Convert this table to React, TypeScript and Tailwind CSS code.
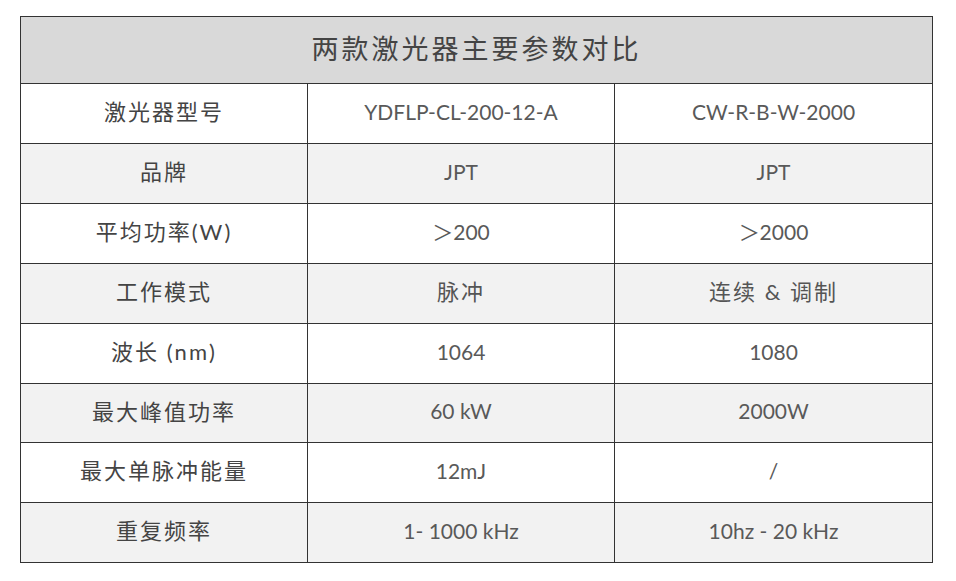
const rows: { label: string; a: string; b: string; h: string; cjk?: boolean }[] = [
  { label: "激光器型号", a: "YDFLP-CL-200-12-A", b: "CW-R-B-W-2000", h: "h-[60px]" },
  { label: "品牌", a: "JPT", b: "JPT", h: "h-[60px]" },
  { label: "平均功率(W)", a: "＞200", b: "＞2000", h: "h-[60px]" },
  { label: "工作模式", a: "脉冲", b: "连续 & 调制", h: "h-[60px]", cjk: true },
  { label: "波长 (nm)", a: "1064", b: "1080", h: "h-[60px]" },
  { label: "最大峰值功率", a: "60 kW", b: "2000W", h: "h-[59px]" },
  { label: "最大单脉冲能量", a: "12mJ", b: "/", h: "h-[60px]" },
  { label: "重复频率", a: "1- 1000 kHz", b: "10hz - 20 kHz", h: "h-[59px]" },
];

export default function App() {
  return (
    <div className="min-h-screen bg-white pt-[16px] pl-[20px] font-['Lato','Noto_Sans_CJK_SC',sans-serif]">
      <div className="w-[913px] border border-[#333]">
        {/* Title */}
        <div className="flex h-[67px] items-center justify-center border-b border-[#333] bg-[#d9d9d9] pb-[2px] text-[27px] tracking-[3px] text-[#444]">
          两款激光器主要参数对比
        </div>

        {rows.map((row, i) => {
          const valueText = row.cjk
            ? "text-[22px] tracking-[2px] text-[#555]"
            : "text-[21px] text-[#595959]";
          return (
            <div
              key={row.label}
              className={`grid grid-cols-[287px_307px_317px] ${row.h} ${
                i % 2 === 1 ? "bg-[#f2f2f2]" : "bg-white"
              } ${i < rows.length - 1 ? "border-b border-[#333]" : ""}`}
            >
              <div className="flex items-center justify-center border-r border-[#333] pb-[4px] text-[22px] tracking-[2px] text-[#444]">
                {row.label}
              </div>
              <div
                className={`flex items-center justify-center border-r border-[#333] pb-[4px] ${valueText}`}
              >
                {row.a}
              </div>
              <div className={`flex items-center justify-center pb-[4px] ${valueText}`}>
                {row.b}
              </div>
            </div>
          );
        })}
      </div>
    </div>
  );
}
